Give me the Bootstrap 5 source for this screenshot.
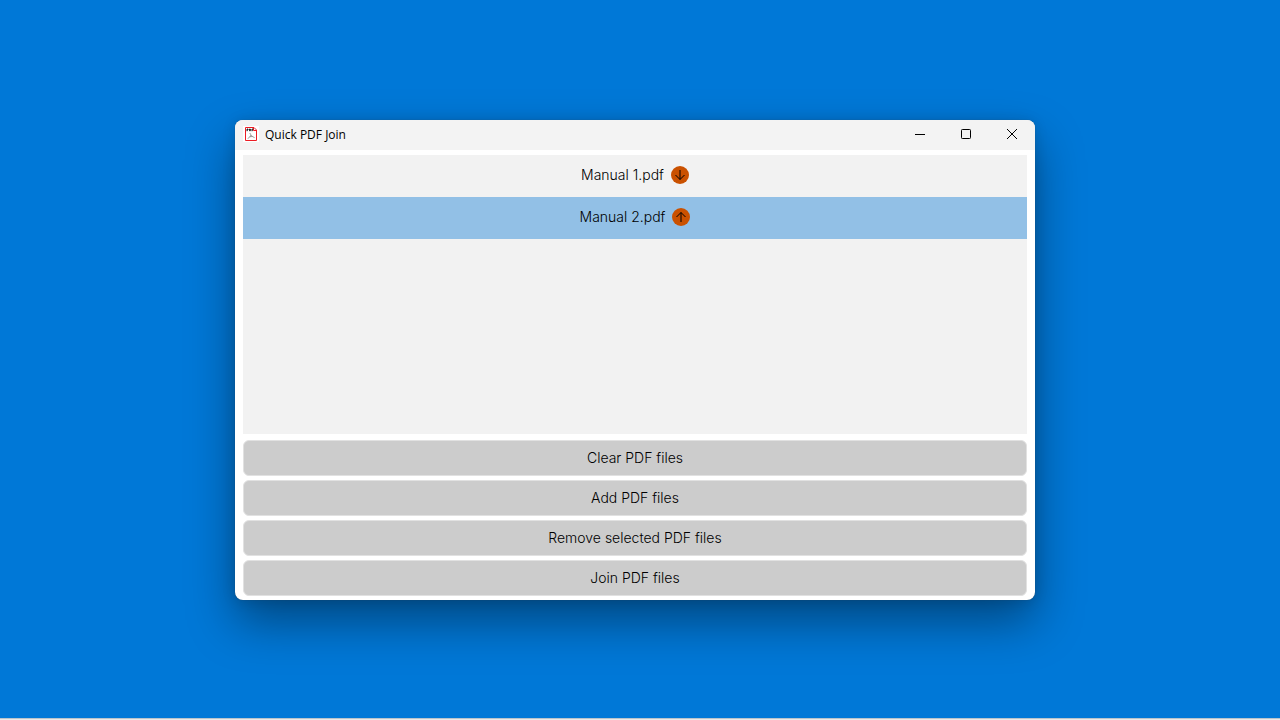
<!DOCTYPE html>
<html lang="en">
<head>
<meta charset="utf-8">
<meta name="viewport" content="width=device-width, initial-scale=1">
<title>Quick PDF Join</title>
<link href="https://cdn.jsdelivr.net/npm/bootstrap@5.3.0/dist/css/bootstrap.min.css" rel="stylesheet">
<style>
  body { background: #0078d7; font-family: Inter, "Liberation Sans", sans-serif; color: #000; }
  .desktop { padding: 2px 10px 0 0; }
  .taskbar-edge { height: 2px; background: #e9e9e9; border-top: 1px solid #b9c4cc; }
  .app-window {
    max-width: 800px; min-height: 480px; border-radius: 8px; background: #fff;
    box-shadow: 0 0 1px rgba(60, 60, 60, .7), 0 22px 48px rgba(0, 0, 0, .4), 0 1px 14px rgba(0, 0, 0, .12);
  }
  .title-bar { height: 30px; padding: 0 0 2px 8px; background: #f3f3f3; font: 12px "Open Sans", sans-serif; }
  .window-title { margin-left: 6px; }
  .caption-btn { width: 46px; height: 28px; }
  .app-body { padding: 5px 8px 4px; }
  .file-list { background: #f2f2f2; margin-bottom: 6px; font-size: 14px; font-weight: 350; line-height: 20px; }
  .file-row { height: 42px; padding-bottom: 2px; gap: 7px; cursor: default; }
  .file-row.selected { background: #92c0e6; }
  .move-btn { width: 18px; height: 18px; background: #ca5100; color: #000; }
  .action-list { gap: 4px; }
  .action-btn {
    --bs-btn-bg: #ccc; --bs-btn-border-color: #e1e1e1; --bs-btn-color: #000;
    --bs-btn-hover-bg: #c2c2c2; --bs-btn-hover-color: #000; --bs-btn-active-bg: #b8b8b8;
    height: 36px; padding: 0 0 2px; border-radius: 6px; font-size: 14px; font-weight: 350;
  }
</style>
</head>
<body class="min-vh-100 d-flex flex-column">
<main class="desktop flex-grow-1 d-flex align-items-center justify-content-center">
  <section class="app-window w-100 d-flex flex-column overflow-hidden" aria-label="Quick PDF Join">
    <header class="title-bar d-flex align-items-center">
      <svg width="16" height="16" viewBox="0 0 16 16" aria-hidden="true">
        <path fill="#fff" d="M0 0h16v16H0z"/>
        <path d="M2.500 1.500h8.500l2.500 2.500v10.500h-11z" fill="#fff" stroke="#ec1c24"/>
        <path d="M10.500 1.500v3h3" fill="none" stroke="#ec1c24"/>
        <path d="M4 5.200V3h1v1H4M6.500 4.800V3h.8l.4.900-.4.900zM9 5.200V3h1.200M9 4h1" fill="none" stroke="#111" stroke-width=".9"/>
        <path d="M6.800 7c1 1.800 1.800 3.600 4.800 4.600M7.900 9c-.5 1.500-1.400 2.700-3.200 3.400M6.700 10.800l3-.4" fill="none" stroke="#888" stroke-width=".8"/>
      </svg>
      <span class="window-title flex-grow-1">Quick PDF Join</span>
      <button type="button" class="caption-btn btn border-0 rounded-0 p-0 d-flex align-items-center justify-content-center" aria-label="Minimize">
        <svg width="10" height="10" viewBox="0 0 10 10"><path d="M0 5.500h10" stroke="#000"/></svg>
      </button>
      <button type="button" class="caption-btn btn border-0 rounded-0 p-0 d-flex align-items-center justify-content-center" aria-label="Maximize">
        <svg width="10" height="10" viewBox="0 0 10 10"><rect x=".5" y=".5" width="9" height="9" rx=".8" fill="none" stroke="#000"/></svg>
      </button>
      <button type="button" class="caption-btn btn border-0 rounded-0 p-0 d-flex align-items-center justify-content-center" aria-label="Close">
        <svg width="10" height="10" viewBox="0 0 10 10"><path d="M0 0l10 10M10 0L0 10" stroke="#000"/></svg>
      </button>
    </header>
    <div class="app-body flex-grow-1 d-flex flex-column">
      <ul class="file-list list-unstyled flex-grow-1">
        <li class="file-row d-flex align-items-center justify-content-center">
          <span>Manual 1.pdf</span>
          <button type="button" class="move-btn btn border-0 rounded-circle p-0 d-flex align-items-center justify-content-center" aria-label="Move Manual 1.pdf down">
            <svg width="18" height="18" viewBox="0 0 18 18" fill="none" stroke="currentColor"><path d="M9 4v9.500M4.500 9l4.500 4.500L13.500 9"/></svg>
          </button>
        </li>
        <li class="file-row selected d-flex align-items-center justify-content-center">
          <span>Manual 2.pdf</span>
          <button type="button" class="move-btn btn border-0 rounded-circle p-0 d-flex align-items-center justify-content-center" aria-label="Move Manual 2.pdf up">
            <svg width="18" height="18" viewBox="0 0 18 18" fill="none" stroke="currentColor"><path d="M9 14V4.500M4.500 9L9 4.500 13.500 9"/></svg>
          </button>
        </li>
      </ul>
      <div class="action-list d-flex flex-column">
        <button type="button" class="action-btn btn">Clear PDF files</button>
        <button type="button" class="action-btn btn">Add PDF files</button>
        <button type="button" class="action-btn btn">Remove selected PDF files</button>
        <button type="button" class="action-btn btn">Join PDF files</button>
      </div>
    </div>
  </section>
</main>
<div class="taskbar-edge"></div>
<script src="https://cdn.jsdelivr.net/npm/bootstrap@5.3.0/dist/js/bootstrap.bundle.min.js"></script>
</body>
</html>
